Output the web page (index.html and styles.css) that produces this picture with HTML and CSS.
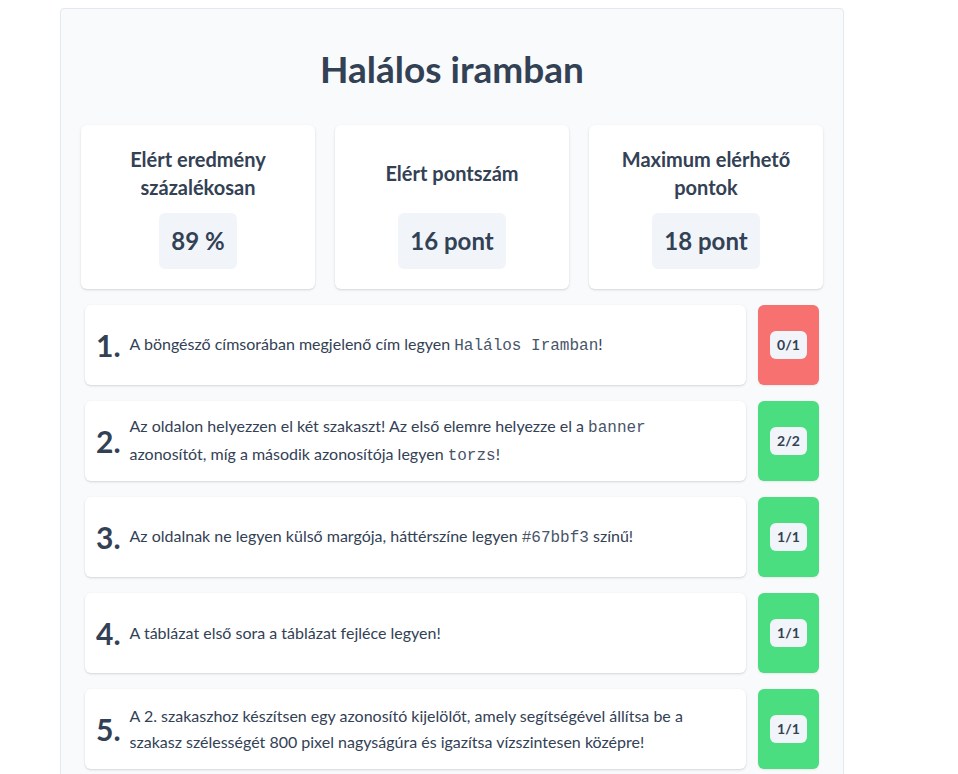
FILE: index.html
```html
<!DOCTYPE html>
<html lang="hu">
<head>
<meta charset="utf-8">
<title>Halálos iramban</title>
<link rel="stylesheet" href="styles.css">
</head>
<body>
<main class="panel">
  <h1 class="title">Halálos iramban</h1>
  <section class="stats">
    <div class="stat">
      <h2 class="stat-label">Elért eredmény százalékosan</h2>
      <div class="stat-value">89 %</div>
    </div>
    <div class="stat">
      <h2 class="stat-label">Elért pontszám</h2>
      <div class="stat-value">16 pont</div>
    </div>
    <div class="stat">
      <h2 class="stat-label">Maximum elérhető pontok</h2>
      <div class="stat-value">18 pont</div>
    </div>
  </section>
  <section class="tasks">
    <div class="task">
      <div class="task-body">
        <span class="task-num">1.</span>
        <p class="task-text">A böngésző címsorában megjelenő cím legyen <code>Halálos Iramban</code>!</p>
      </div>
      <div class="score score-fail"><span class="score-pill">0/1</span></div>
    </div>
    <div class="task">
      <div class="task-body">
        <span class="task-num">2.</span>
        <p class="task-text">Az oldalon helyezzen el két szakaszt! Az első elemre helyezze el a <code>banner</code> azonosítót, míg a második azonosítója legyen <code>torzs</code>!</p>
      </div>
      <div class="score score-ok"><span class="score-pill">2/2</span></div>
    </div>
    <div class="task">
      <div class="task-body">
        <span class="task-num">3.</span>
        <p class="task-text">Az oldalnak ne legyen külső margója, háttérszíne legyen <code>#67bbf3</code> színű!</p>
      </div>
      <div class="score score-ok"><span class="score-pill">1/1</span></div>
    </div>
    <div class="task">
      <div class="task-body">
        <span class="task-num">4.</span>
        <p class="task-text">A táblázat első sora a táblázat fejléce legyen!</p>
      </div>
      <div class="score score-ok"><span class="score-pill">1/1</span></div>
    </div>
    <div class="task">
      <div class="task-body">
        <span class="task-num">5.</span>
        <p class="task-text">A 2. szakaszhoz készítsen egy azonosító kijelölőt, amely segítségével állítsa be a szakasz szélességét 800 pixel nagyságúra és igazítsa vízszintesen középre!</p>
      </div>
      <div class="score score-ok"><span class="score-pill">1/1</span></div>
    </div>
  </section>
</main>
</body>
</html>
```

FILE: styles.css
```css
* { box-sizing: border-box; }

body {
  margin: 0;
  background: #ffffff;
  font-family: Lato, "Noto Sans", sans-serif;
  color: #334155;
}

.panel {
  width: 784px;
  margin: 8px 0 0 60px;
  padding: 40px 20px 40px 20px;
  background: #f8fafc;
  border: 1px solid #e2e8f0;
  border-radius: 4px;
}

.title {
  margin: 0 0 36px 0;
  text-align: center;
  font-size: 37px;
  line-height: 40px;
  font-weight: 700;
  color: #334155;
}

.stats {
  display: grid;
  grid-template-columns: repeat(3, 1fr);
  gap: 20px;
  margin-bottom: 16px;
}

.stat {
  background: #ffffff;
  border-radius: 6px;
  box-shadow: 0 1px 3px rgba(0, 0, 0, 0.1), 0 1px 2px rgba(0, 0, 0, 0.06);
  padding: 20px;
  display: flex;
  flex-direction: column;
  align-items: center;
  justify-content: space-between;
  height: 164px;
}

.stat-label {
  margin: 0;
  flex: 1;
  display: flex;
  align-items: center;
  text-align: center;
  font-size: 20px;
  line-height: 28px;
  font-weight: 700;
  color: #334155;
}

.stat-value {
  margin-top: 12px;
  background: #f1f5f9;
  border-radius: 6px;
  padding: 12px;
  font-size: 24px;
  line-height: 32px;
  font-weight: 700;
}

.tasks {
  display: flex;
  flex-direction: column;
  gap: 16px;
  padding: 0 4px;
}

.task {
  display: flex;
  gap: 12px;
  height: 80px;
}

.task-body {
  flex: 1;
  display: flex;
  align-items: center;
  gap: 9px;
  background: #ffffff;
  border-radius: 6px;
  box-shadow: 0 1px 3px rgba(0, 0, 0, 0.1), 0 1px 2px rgba(0, 0, 0, 0.06);
  padding: 0 24px 0 11px;
}

.task-num {
  font-size: 30px;
  line-height: 36px;
  font-weight: 700;
  color: #334155;
}

.task-text {
  margin: 0;
  font-size: 16px;
  line-height: 26px;
}

code {
  font-family: "Liberation Mono", "DejaVu Sans Mono", monospace;
  font-size: 16px;
  color: #475569;
}

.score {
  width: 61px;
  display: flex;
  align-items: center;
  justify-content: center;
  border-radius: 6px;
  box-shadow: 0 1px 2px rgba(0, 0, 0, 0.08);
}

.score-fail { background: #f87171; }
.score-ok { background: #4ade80; }

.score-pill {
  background: #f1f5f9;
  border-radius: 6px;
  padding: 0 7px;
  font-size: 14px;
  line-height: 28px;
  font-weight: 700;
  color: #334155;
}
```
